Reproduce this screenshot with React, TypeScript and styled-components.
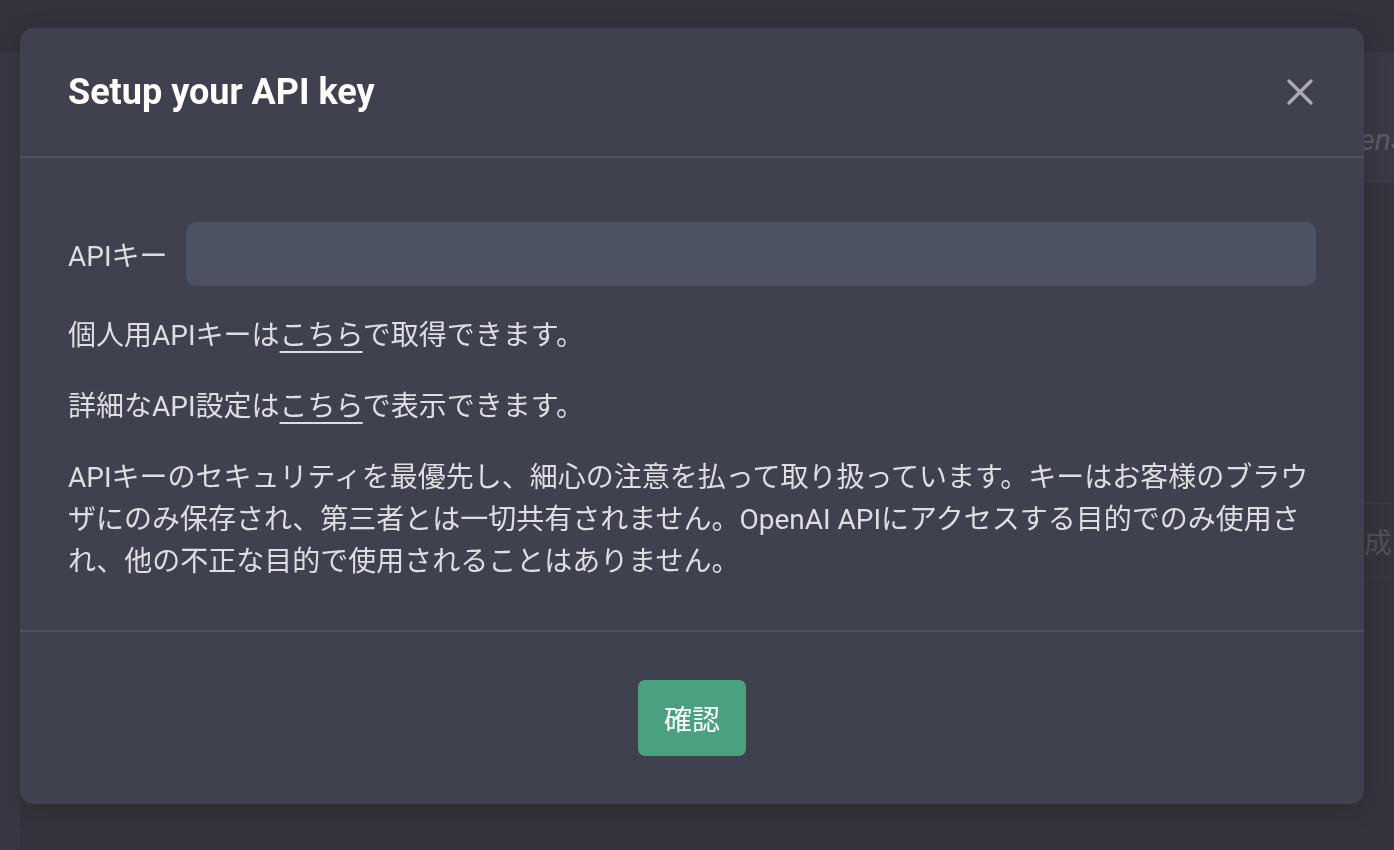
import React from "react";
import styled, { createGlobalStyle } from "styled-components";

const GlobalStyle = createGlobalStyle`
  * { box-sizing: border-box; }
  html, body { margin: 0; padding: 0; background: #34343e; }
  body {
    font-family: Roboto, "Noto Sans CJK JP", "Noto Sans", sans-serif;
    overflow: hidden;
  }
`;

/* ---------- background page (dimmed, behind the dialog) ---------- */

const Page = styled.div`
  width: 1394px;
  height: 850px;
  display: flex;
  flex-direction: column;
  background: #34343e;
  overflow: hidden;
`;

const TopBar = styled.div`
  height: 52px;
  flex: none;
  background: #33333d;
`;

const PageBody = styled.div`
  flex: 1;
  display: flex;
`;

const SideColumn = styled.div`
  width: 20px;
  flex: none;
  background: #383844;
`;

const MainColumn = styled.div`
  flex: 1;
  display: flex;
  flex-direction: column;
  overflow: hidden;
`;

const HeroBand = styled.div`
  height: 130px;
  flex: none;
  background: #393945;
  border-bottom: 1px solid #40404c;
  display: flex;
  align-items: flex-end;
  justify-content: flex-end;
  padding: 0 0 24px;
  overflow: hidden;
`;

const FaintItalic = styled.span`
  font-family: Roboto, sans-serif;
  font-style: italic;
  font-size: 30px;
  color: #5b5b67;
  white-space: nowrap;
  margin-right: -14px;
`;

const Spacer = styled.div<{ $h: number }>`
  height: ${(p) => p.$h}px;
  flex: none;
`;

const FaintRow = styled.div`
  height: 75px;
  flex: none;
  border-top: 1px solid #3d3d49;
  border-bottom: 1px solid #3d3d49;
  display: flex;
  align-items: center;
  justify-content: flex-end;
  overflow: hidden;
`;

const FaintCjk = styled.span`
  font-size: 28px;
  color: #4e4e5a;
  white-space: nowrap;
  margin-right: 2px;
`;

/* ---------- dialog ---------- */

const Overlay = styled.div`
  position: fixed;
  inset: 0;
  display: flex;
  align-items: flex-start;
  justify-content: flex-start;
  padding: 28px 0 0 20px;
`;

const Dialog = styled.div`
  width: 1344px;
  background: #40414f;
  border-radius: 14px;
  box-shadow: 0 6px 24px rgba(0, 0, 0, 0.18);
  display: flex;
  flex-direction: column;
  overflow: hidden;
`;

const Header = styled.div`
  height: 130px;
  padding: 0 50px 0 48px;
  display: flex;
  align-items: center;
  justify-content: space-between;
  border-bottom: 2px solid #4b515f;
`;

const Title = styled.h2`
  margin: 0;
  font-family: Roboto, sans-serif;
  font-weight: 700;
  font-size: 36px;
  letter-spacing: 0;
  color: #ffffff;
  line-height: 1;
`;

const CloseButton = styled.button`
  width: 28px;
  height: 28px;
  padding: 0;
  border: none;
  background: transparent;
  display: flex;
  align-items: center;
  justify-content: center;
  cursor: pointer;
`;

const Body = styled.div`
  padding: 64px 48px 47px;
  display: flex;
  flex-direction: column;
  gap: 29px;
  border-bottom: 2px solid #4b515f;
`;

const FieldRow = styled.label`
  display: flex;
  align-items: center;
  gap: 18px;
`;

const FieldLabel = styled.span`
  font-size: 28px;
  color: #dcdee3;
  white-space: nowrap;
`;

const KeyInput = styled.input`
  flex: 1;
  height: 64px;
  border: none;
  outline: none;
  border-radius: 10px;
  background: #4c5261;
  color: #ececf1;
  font-size: 26px;
  padding: 0 20px;
  font-family: inherit;
`;

const Paragraph = styled.p`
  margin: 0;
  font-size: 28px;
  line-height: 42px;
  color: #dcdee3;
`;

const Link = styled.a`
  color: #dcdee3;
  text-decoration: underline;
  text-underline-offset: 6px;
  text-decoration-thickness: 2px;
`;

const Footer = styled.div`
  padding: 48px 0 48px;
  display: flex;
  justify-content: center;
`;

const ConfirmButton = styled.button`
  width: 108px;
  height: 76px;
  border: none;
  border-radius: 7px;
  background: #4aa180;
  color: #ffffff;
  font-family: "Noto Sans CJK JP", sans-serif;
  font-size: 28px;
  cursor: pointer;
`;

export default function App() {
  return (
    <>
      <GlobalStyle />
      <Page>
        <TopBar />
        <PageBody>
          <SideColumn />
          <MainColumn>
            <HeroBand>
              <FaintItalic>OpenS</FaintItalic>
            </HeroBand>
            <Spacer $h={321} />
            <FaintRow>
              <FaintCjk>作成</FaintCjk>
            </FaintRow>
          </MainColumn>
        </PageBody>
      </Page>
      <Overlay>
        <Dialog role="dialog" aria-label="Setup your API key">
          <Header>
            <Title>Setup your API key</Title>
            <CloseButton aria-label="close">
              <svg width="26" height="26" viewBox="0 0 26 26" fill="none">
                <path
                  d="M2 2 L24 24 M24 2 L2 24"
                  stroke="#a9a9b8"
                  strokeWidth="3.2"
                  strokeLinecap="round"
                />
              </svg>
            </CloseButton>
          </Header>
          <Body>
            <FieldRow>
              <FieldLabel>APIキー</FieldLabel>
              <KeyInput type="password" />
            </FieldRow>
            <Paragraph>
              個人用APIキーは<Link href="#">こちら</Link>で取得できます。
            </Paragraph>
            <Paragraph>
              詳細なAPI設定は<Link href="#">こちら</Link>で表示できます。
            </Paragraph>
            <Paragraph>
              APIキーのセキュリティを最優先し、細心の注意を払って取り扱っています。キーはお客様のブラウザにのみ保存され、第三者とは一切共有されません。OpenAI
              APIにアクセスする目的でのみ使用され、他の不正な目的で使用されることはありません。
            </Paragraph>
          </Body>
          <Footer>
            <ConfirmButton>確認</ConfirmButton>
          </Footer>
        </Dialog>
      </Overlay>
    </>
  );
}
